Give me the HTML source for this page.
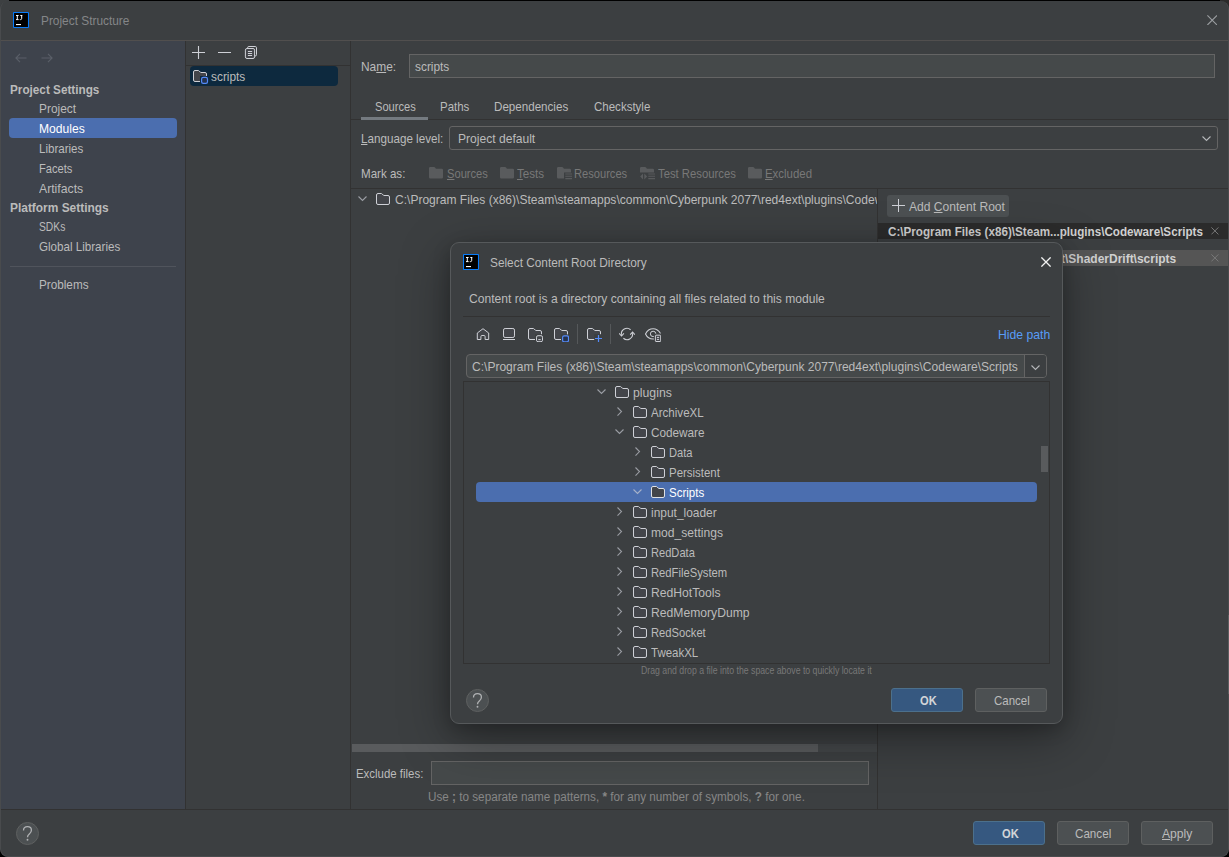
<!DOCTYPE html>
<html>
<head>
<meta charset="utf-8">
<title>Project Structure</title>
<style>
*{box-sizing:border-box;margin:0;padding:0}
html,body{width:1229px;height:857px;overflow:hidden;background:#000}
body{font-family:"Liberation Sans",sans-serif;font-size:13px;color:#bbbbbb;position:relative}
div,svg,span{position:absolute}
.t{white-space:nowrap;line-height:16px;height:16px;transform-origin:0 0}
.t b{font-weight:bold}
u{text-decoration:underline;text-decoration-thickness:1px;text-underline-offset:0.5px}
#win{left:0;top:1px;width:1229px;height:856px;background:#3c3f41;border-radius:8px;overflow:hidden}
.v{width:1px;background:#323232}
.h{height:1px;background:#323232}
.btn{height:24px;border:1px solid #5e6060;background:#4c5052;border-radius:3px}
.def{background:#365880;border-color:#4c708c}
.help{width:23px;height:23px;border-radius:50%;background:#4c5052;border:1px solid #5e6060}
.field{background:#45494a;border:1px solid #646464}
.sel{background:#4b6eaf;border-radius:4px}
</style>
</head>
<body>
<div style="left:0;top:0;width:9px;height:10px;background:#3d4042"></div>
<div style="left:1220px;top:0;width:9px;height:10px;background:#2b2b2b"></div>
<div id="win">
<div id="pg" style="left:0;top:-1px;width:1229px;height:857px">
<div class="h" style="left:0;top:40px;width:1229px;background:#514f4e"></div>
<svg style="left:13px;top:12px" width="16" height="16" viewBox="0 0 16 16"><rect x="0.5" y="0.5" width="15" height="15" rx="0.8" fill="#000" stroke="#087cfa" stroke-width="1.1"/><path d="M3 3.5 H5.6 M4.3 3.5 V7.6 M3 7.6 H5.6 M7.3 3.5 H9.3 M8.7 3.5 V6.4 Q8.7 7.6 7.5 7.6 H6.8" fill="none" stroke="#fff" stroke-width="1"/><rect x="3" y="12" width="5" height="1.1" fill="#fff"/></svg>
<svg style="left:1206.8px;top:14.8px" width="10.4" height="10.4" viewBox="0 0 10.4 10.4"><path d="M0.4 0.4 L10.0 10.0 M10.0 0.4 L0.4 10.0" fill="none" stroke="#9a9da0" stroke-width="1.1"/></svg>
<div style="left:0;top:41px;width:185px;height:768px;background:#3e434c"></div>
<div class="v" style="left:185px;top:41px;height:768px"></div>
<div class="v" style="left:350px;top:41px;height:768px"></div>
<div class="h" style="left:0;top:809px;width:1229px"></div>
<svg style="left:15px;top:53px" width="12" height="10" viewBox="0 0 12 10"><path d="M11.5 5 H1 M5 0.8 L0.9 5 L5 9.2" fill="none" stroke="#5a5f68" stroke-width="1.1"/></svg>
<svg style="left:41px;top:53px" width="12" height="10" viewBox="0 0 12 10"><path d="M0.5 5 H11 M7 0.8 L11.1 5 L7 9.2" fill="none" stroke="#5a5f68" stroke-width="1.1"/></svg>
<div class="sel" style="left:9px;top:118px;width:168px;height:20px"></div>
<div class="h" style="left:10px;top:266px;width:166px;background:#50545c"></div>
<svg style="left:192px;top:46px" width="13" height="13" viewBox="0 0 13 13"><path d="M6.5 0 V13 M0 6.5 H13" stroke="#ced0d6" stroke-width="1.1" fill="none"/></svg>
<svg style="left:218px;top:46px" width="13" height="13" viewBox="0 0 13 13"><path d="M0 6.5 H13" stroke="#ced0d6" stroke-width="1.1" fill="none"/></svg>
<svg style="left:244px;top:46px" width="13" height="13" viewBox="0 0 13 13"><path d="M3.6 2.2 V1.8 Q3.6 0.5 4.9 0.5 H11.2 Q12.5 0.5 12.5 1.8 V8.7 Q12.5 10 11.2 10 H10.9" fill="none" stroke="#ced0d6" stroke-width="1"/><rect x="1.4" y="2.5" width="9.2" height="10" rx="1.6" fill="#43454a" stroke="#ced0d6" stroke-width="1"/><path d="M3.9 5.5 H8.1 M3.9 7.5 H8.1 M3.9 9.5 H8.1" stroke="#ced0d6" stroke-width="1"/></svg>
<div class="h" style="left:186px;top:65px;width:164px"></div>
<div style="left:190px;top:66px;width:148px;height:20px;background:#0d293e;border-radius:4px"></div>
<svg style="left:192px;top:68px" width="16" height="16" viewBox="0 0 16 16"><path d="M1.5 4 Q1.5 2.5 3 2.5 H6.2 Q6.8 2.5 7.2 2.95 L8.3 4.2 Q8.6 4.5 9 4.5 H13 Q14.5 4.5 14.5 6 V12 Q14.5 13.5 13 13.5 H3 Q1.5 13.5 1.5 12 Z" fill="#43454a" stroke="#ced0d6" stroke-width="1"/></svg>
<div style="left:200px;top:76px;width:9px;height:9px;background:#0d293e"></div>
<svg style="left:200px;top:76px" width="9" height="9" viewBox="0 0 9 9"><rect x="1.6" y="1.4" width="5.9" height="5.9" rx="1.6" fill="#25324d" stroke="#548af7" stroke-width="1.2"/></svg>
<div class="field" style="left:409px;top:54px;width:806px;height:24px"></div>
<div class="h" style="left:351px;top:119px;width:878px"></div>
<div style="left:361px;top:117px;width:67px;height:3px;background:#747a80"></div>
<div style="left:449px;top:126px;width:769px;height:24px;border:1px solid #646464;border-radius:3px;background:#3c3f41"></div>
<svg style="left:1201.7px;top:136.3px" width="10" height="6" viewBox="0 0 10 6"><path d="M0.5 0.5 L4.5 4.4 L8.5 0.5" fill="none" stroke="#b4b6b9" stroke-width="1.1"/></svg>
<svg style="left:429px;top:167px" width="16" height="13" viewBox="0 0 16 13"><path d="M0 1.2 Q0 0 1.2 0 H5 Q5.7 0 6.1 0.6 L6.9 1.8 H12.8 Q14 1.8 14 3 V10.3 Q14 11.5 12.8 11.5 H1.2 Q0 11.5 0 10.3 Z" fill="#595b5d"/></svg>
<svg style="left:500px;top:167px" width="16" height="13" viewBox="0 0 16 13"><path d="M0 1.2 Q0 0 1.2 0 H5 Q5.7 0 6.1 0.6 L6.9 1.8 H12.8 Q14 1.8 14 3 V10.3 Q14 11.5 12.8 11.5 H1.2 Q0 11.5 0 10.3 Z" fill="#595b5d"/></svg>
<svg style="left:557px;top:167px" width="16" height="13" viewBox="0 0 16 13"><path d="M0 1.2 Q0 0 1.2 0 H5 Q5.7 0 6.1 0.6 L6.9 1.8 H12.8 Q14 1.8 14 3 V5.6 H7 V11.5 H1.2 Q0 11.5 0 10.3 Z" fill="#595b5d"/><path d="M8.3 7 H15 M8.3 9.3 H15 M8.3 11.6 H15" stroke="#595b5d" stroke-width="1.1"/></svg>
<svg style="left:640px;top:167px" width="16" height="13" viewBox="0 0 16 13"><path d="M0 1.2 Q0 0 1.2 0 H5 Q5.7 0 6.1 0.6 L6.9 1.8 H12.8 Q14 1.8 14 3 V5.6 H0 Z" fill="#595b5d"/><path d="M3 6.6 V12.4 L0.2 9.5 Z M4.3 6.6 V12.4 L7.1 9.5 Z" fill="#595b5d"/><path d="M8.3 7 H15 M8.3 9.3 H15 M8.3 11.6 H15" stroke="#595b5d" stroke-width="1.1"/></svg>
<svg style="left:748px;top:167px" width="16" height="13" viewBox="0 0 16 13"><path d="M0 1.2 Q0 0 1.2 0 H5 Q5.7 0 6.1 0.6 L6.9 1.8 H12.8 Q14 1.8 14 3 V10.3 Q14 11.5 12.8 11.5 H1.2 Q0 11.5 0 10.3 Z" fill="#595b5d"/></svg>
<div class="h" style="left:351px;top:188px;width:878px"></div>
<div class="v" style="left:877px;top:189px;height:620px"></div>
<svg style="left:358.2px;top:195.6px" width="10" height="6" viewBox="0 0 10 6"><path d="M0.5 0.5 L4.5 4.4 L8.5 0.5" fill="none" stroke="#9a9da3" stroke-width="1.1"/></svg>
<svg style="left:375px;top:191px" width="16" height="16" viewBox="0 0 16 16"><path d="M1.5 4 Q1.5 2.5 3 2.5 H6.2 Q6.8 2.5 7.2 2.95 L8.3 4.2 Q8.6 4.5 9 4.5 H13 Q14.5 4.5 14.5 6 V12 Q14.5 13.5 13 13.5 H3 Q1.5 13.5 1.5 12 Z" fill="#43454a" stroke="#ced0d6" stroke-width="1"/></svg>
<div id="clip" style="left:351px;top:189px;width:526px;height:30px;overflow:hidden"><span class="t" style="left:43.70px;top:2.70px;font-size:13px;color:#bbbbbb;transform:scaleX(0.9258)">C:\Program Files (x86)\Steam\steamapps\common\Cyberpunk 2077\red4ext\plugins\Codeware\Scripts</span></div>
<div style="left:887px;top:195px;width:122px;height:22px;background:#4c5052;border-radius:3px"></div>
<svg style="left:892px;top:199px" width="13" height="13" viewBox="0 0 13 13"><path d="M6.5 0 V13 M0 6.5 H13" stroke="#ced0d6" stroke-width="1" fill="none"/></svg>
<div style="left:878px;top:223px;width:351px;height:16px;background:#2b2b2b"></div>
<div style="left:878px;top:250px;width:351px;height:16px;background:#555555"></div>
<svg style="left:1211.1999999999998px;top:227.2px" width="7.8" height="7.8" viewBox="0 0 7.8 7.8"><path d="M0.4 0.4 L7.3999999999999995 7.3999999999999995 M7.3999999999999995 0.4 L0.4 7.3999999999999995" fill="none" stroke="#777777" stroke-width="1.0"/></svg>
<svg style="left:1211.1999999999998px;top:254.29999999999998px" width="7.8" height="7.8" viewBox="0 0 7.8 7.8"><path d="M0.4 0.4 L7.3999999999999995 7.3999999999999995 M7.3999999999999995 0.4 L0.4 7.3999999999999995" fill="none" stroke="#787878" stroke-width="1.0"/></svg>
<div style="left:352px;top:744px;width:525px;height:8px;background:#434648"></div>
<div style="left:352px;top:744px;width:466px;height:8px;background:#595b5d"></div>
<div class="field" style="left:431px;top:761px;width:438px;height:24px"></div>
<div class="help" style="left:16px;top:822px"></div>
<div class="btn def" style="left:973px;top:821px;width:72px"></div>
<div class="btn" style="left:1057px;top:821px;width:72px"></div>
<div class="btn" style="left:1141px;top:821px;width:72px"></div>
<span class="t" style="left:41.39px;top:13.00px;font-size:13px;color:#848688;transform:scaleX(0.9126)">Project Structure</span>
<span class="t" style="left:10.40px;top:82.00px;font-size:13px;color:#bbbbbb;transform:scaleX(0.9031);font-weight:bold">Project Settings</span>
<span class="t" style="left:39.38px;top:101.00px;font-size:13px;color:#bbbbbb;transform:scaleX(0.9154)">Project</span>
<span class="t" style="left:39.37px;top:121.00px;font-size:13px;color:#ffffff;transform:scaleX(0.9313)">Modules</span>
<span class="t" style="left:39.41px;top:141.00px;font-size:13px;color:#bbbbbb;transform:scaleX(0.8878)">Libraries</span>
<span class="t" style="left:39.44px;top:161.00px;font-size:13px;color:#bbbbbb;transform:scaleX(0.8553)">Facets</span>
<span class="t" style="left:38.80px;top:181.00px;font-size:13px;color:#bbbbbb;transform:scaleX(0.9404)">Artifacts</span>
<span class="t" style="left:10.38px;top:200.00px;font-size:13px;color:#bbbbbb;transform:scaleX(0.9170);font-weight:bold">Platform Settings</span>
<span class="t" style="left:38.91px;top:219.00px;font-size:13px;color:#bbbbbb;transform:scaleX(0.7906)">SDKs</span>
<span class="t" style="left:38.80px;top:239.00px;font-size:13px;color:#bbbbbb;transform:scaleX(0.8923)">Global Libraries</span>
<span class="t" style="left:39.40px;top:277.00px;font-size:13px;color:#bbbbbb;transform:scaleX(0.9019)">Problems</span>
<span class="t" style="left:211.20px;top:69.00px;font-size:13px;color:#bbbbbb;transform:scaleX(0.9135)">scripts</span>
<span class="t" style="left:360.88px;top:59.00px;font-size:13px;color:#bbbbbb;transform:scaleX(0.9167)">Na<u>m</u>e:</span>
<span class="t" style="left:415.20px;top:59.00px;font-size:13px;color:#bbbbbb;transform:scaleX(0.9135)">scripts</span>
<span class="t" style="left:374.55px;top:99.00px;font-size:13px;color:#bbbbbb;transform:scaleX(0.8532)">Sources</span>
<span class="t" style="left:439.92px;top:99.00px;font-size:13px;color:#bbbbbb;transform:scaleX(0.8812)">Paths</span>
<span class="t" style="left:493.91px;top:99.00px;font-size:13px;color:#bbbbbb;transform:scaleX(0.8927)">Dependencies</span>
<span class="t" style="left:594.20px;top:99.00px;font-size:13px;color:#bbbbbb;transform:scaleX(0.8857)">Checkstyle</span>
<span class="t" style="left:360.90px;top:131.00px;font-size:13px;color:#bbbbbb;transform:scaleX(0.8967)"><u>L</u>anguage level:</span>
<span class="t" style="left:457.87px;top:131.00px;font-size:13px;color:#bbbbbb;transform:scaleX(0.9293)">Project default</span>
<span class="t" style="left:360.91px;top:165.50px;font-size:13px;color:#bbbbbb;transform:scaleX(0.8896)">Mark as:</span>
<span class="t" style="left:446.54px;top:166.00px;font-size:13px;color:#787878;transform:scaleX(0.8574)"><u>S</u>ources</span>
<span class="t" style="left:517.20px;top:166.00px;font-size:13px;color:#787878;transform:scaleX(0.8933)"><u>T</u>ests</span>
<span class="t" style="left:573.94px;top:166.00px;font-size:13px;color:#787878;transform:scaleX(0.8557)">Resources</span>
<span class="t" style="left:657.70px;top:166.00px;font-size:13px;color:#787878;transform:scaleX(0.8685)">Test Resources</span>
<span class="t" style="left:765.42px;top:166.00px;font-size:13px;color:#787878;transform:scaleX(0.8788)"><u>E</u>xcluded</span>
<span class="t" style="left:909.10px;top:199.00px;font-size:13px;color:#bbbbbb;transform:scaleX(0.9282)">Add <u>C</u>ontent Root</span>
<span class="t" style="left:888.20px;top:223.50px;font-size:13px;color:#d0d0d0;transform:scaleX(0.8969);font-weight:bold">C:\Program Files (x86)\Steam...plugins\Codeware\Scripts</span>
<span class="t" style="left:1060.70px;top:251.00px;font-size:13px;color:#d0d0d0;transform:scaleX(0.9224);font-weight:bold">t\ShaderDrift\scripts</span>
<span class="t" style="left:355.85px;top:766.00px;font-size:12px;color:#bbbbbb;transform:scaleX(0.9522)">Exclude files:</span>
<span class="t" style="left:428.32px;top:788.50px;font-size:12px;color:#868686;transform:scaleX(0.9758)">Use <b>;</b> to separate name patterns, <b>*</b> for any number of symbols, <b>?</b> for one.</span>
<span class="t" style="left:1001.70px;top:825.50px;font-size:13px;color:#d2d5d8;transform:scaleX(0.8579);font-weight:bold">OK</span>
<span class="t" style="left:1075.20px;top:825.50px;font-size:13px;color:#bbbbbb;transform:scaleX(0.8950)">Cancel</span>
<span class="t" style="left:1162.20px;top:825.50px;font-size:13px;color:#bbbbbb;transform:scaleX(0.9333)"><u>A</u>pply</span>
<svg style="left:16px;top:822px" width="23" height="23" viewBox="0 0 23 23"><path d="M7.5 8.6 Q7.5 4.7 11.5 4.7 Q15.4 4.7 15.4 8.2 Q15.4 10.2 13.3 11.9 Q11.5 13.3 11.5 15.3" fill="none" stroke="#b0b2b4" stroke-width="1.3"/><circle cx="11.5" cy="17.8" r="0.95" fill="#b0b2b4"/></svg>
<div id="modal" style="left:450px;top:242px;width:613px;height:482px;background:#3c3f41;border:1px solid #56595b;border-radius:9px;box-shadow:0 14px 50px 0 rgba(0,0,0,0.36),0 5px 18px 0 rgba(0,0,0,0.2)"></div>
<svg style="left:463px;top:254px" width="16" height="16" viewBox="0 0 16 16"><rect x="0.5" y="0.5" width="15" height="15" rx="0.8" fill="#000" stroke="#087cfa" stroke-width="1.1"/><path d="M3 3.5 H5.6 M4.3 3.5 V7.6 M3 7.6 H5.6 M7.3 3.5 H9.3 M8.7 3.5 V6.4 Q8.7 7.6 7.5 7.6 H6.8" fill="none" stroke="#fff" stroke-width="1"/><rect x="3" y="12" width="5" height="1.1" fill="#fff"/></svg>
<svg style="left:1041px;top:257px" width="10" height="10" viewBox="0 0 10 10"><path d="M0.4 0.4 L9.6 9.6 M9.6 0.4 L0.4 9.6" fill="none" stroke="#f2f2f2" stroke-width="1.3"/></svg>
<div class="h" style="left:463px;top:316px;width:587px"></div>
<svg style="left:475px;top:326px" width="16" height="16" viewBox="0 0 16 16"><path d="M2.3 7 L8 2.7 L13.7 7 V13.5 H10.1 V10.6 Q10.1 9.5 9 9.5 H7 Q5.9 9.5 5.9 10.6 V13.5 H2.3 Z" fill="#43454a" stroke="#ced0d6" stroke-width="1" stroke-linejoin="round"/></svg>
<svg style="left:501px;top:326px" width="16" height="16" viewBox="0 0 16 16"><rect x="2.5" y="2.5" width="11" height="9" rx="1.6" fill="#43454a" stroke="#ced0d6" stroke-width="1"/><path d="M2 13.5 H14" stroke="#ced0d6" stroke-width="1"/></svg>
<svg style="left:527px;top:326px" width="16" height="16" viewBox="0 0 16 16"><path d="M1.5 4 Q1.5 2.5 3 2.5 H6.2 Q6.8 2.5 7.2 2.95 L8.3 4.2 Q8.6 4.5 9 4.5 H13 Q14.5 4.5 14.5 6 V12 Q14.5 13.5 13 13.5 H3 Q1.5 13.5 1.5 12 Z" fill="#43454a" stroke="#ced0d6" stroke-width="1"/><rect x="8" y="8.2" width="9" height="9" fill="#3c3f41"/><rect x="9.5" y="9.7" width="6" height="6" rx="1.5" fill="#43454a" stroke="#ced0d6" stroke-width="1"/><path d="M11.3 13.6 H13.7" stroke="#ced0d6" stroke-width="1"/></svg>
<svg style="left:553px;top:326px" width="16" height="16" viewBox="0 0 16 16"><path d="M1.5 4 Q1.5 2.5 3 2.5 H6.2 Q6.8 2.5 7.2 2.95 L8.3 4.2 Q8.6 4.5 9 4.5 H13 Q14.5 4.5 14.5 6 V12 Q14.5 13.5 13 13.5 H3 Q1.5 13.5 1.5 12 Z" fill="#43454a" stroke="#ced0d6" stroke-width="1"/><rect x="8" y="8.4" width="9" height="9" fill="#3c3f41"/><rect x="9.6" y="9.9" width="5.9" height="5.9" rx="1.5" fill="#25324d" stroke="#548af7" stroke-width="1.2"/></svg>
<div class="v" style="left:577px;top:324px;height:20px;background:#55585a"></div>
<div class="v" style="left:610px;top:324px;height:20px;background:#55585a"></div>
<svg style="left:586px;top:326px" width="16" height="16" viewBox="0 0 16 16"><path d="M1.5 4 Q1.5 2.5 3 2.5 H6.2 Q6.8 2.5 7.2 2.95 L8.3 4.2 Q8.6 4.5 9 4.5 H13 Q14.5 4.5 14.5 6 V12 Q14.5 13.5 13 13.5 H3 Q1.5 13.5 1.5 12 Z" fill="#43454a" stroke="#ced0d6" stroke-width="1"/><rect x="8.2" y="8.2" width="9" height="9" fill="#3c3f41"/><path d="M12.5 9 V16 M9 12.5 H16" stroke="#548af7" stroke-width="1.2"/></svg>
<svg style="left:619px;top:326px" width="16" height="16" viewBox="0 0 16 16"><path d="M2.43 8.8 A5.6 5.6 0 0 1 11.6 3.71 M4.4 12.29 A5.6 5.6 0 0 0 13.57 7.2" fill="none" stroke="#ced0d6" stroke-width="1.1"/><path d="M0.1 7.4 L2.5 10 L4.9 7.4 M11.2 8.7 L13.6 6.1 L16 8.7" fill="none" stroke="#ced0d6" stroke-width="1.1"/></svg>
<svg style="left:645px;top:326px" width="16" height="16" viewBox="0 0 16 16"><path d="M15.6 7.6 C13.6 4.3 11.2 2.8 8.1 2.8 C4.6 2.8 2 4.9 0.5 7.9 C2 11 4.6 13 8.1 13 H9.4" fill="none" stroke="#ced0d6" stroke-width="1.1"/><circle cx="8.1" cy="7.9" r="2.7" fill="none" stroke="#ced0d6" stroke-width="1"/><rect x="8.9" y="7.7" width="9" height="9" fill="#3c3f41"/><rect x="10.4" y="9.2" width="5.3" height="6.3" rx="0.6" fill="#43454a" stroke="#ced0d6" stroke-width="1"/><path d="M11.9 11.4 H14.1 M11.9 13.4 H14.1" stroke="#ced0d6" stroke-width="1"/></svg>
<div class="field" style="left:466px;top:354px;width:581px;height:24px;border-radius:4px"></div>
<div style="left:1024px;top:355px;width:22px;height:22px;background:#3c3f41;border-left:1px solid #646464;border-radius:0 3px 3px 0"></div>
<svg style="left:1030.5px;top:364.6px" width="10" height="6" viewBox="0 0 10 6"><path d="M0.5 0.5 L4.5 4.4 L8.5 0.5" fill="none" stroke="#b4b6b9" stroke-width="1.1"/></svg>
<div style="left:463px;top:381px;width:587px;height:283px;border:1px solid #323232"></div>
<div style="left:1040.5px;top:446px;width:7.5px;height:26px;background:#595b5d"></div>
<div class="sel" style="left:476px;top:482px;width:561px;height:20px"></div>
<svg style="left:614px;top:384px" width="16" height="16" viewBox="0 0 16 16"><path d="M1.5 4 Q1.5 2.5 3 2.5 H6.2 Q6.8 2.5 7.2 2.95 L8.3 4.2 Q8.6 4.5 9 4.5 H13 Q14.5 4.5 14.5 6 V12 Q14.5 13.5 13 13.5 H3 Q1.5 13.5 1.5 12 Z" fill="#43454a" stroke="#ced0d6" stroke-width="1"/></svg>
<svg style="left:597px;top:388.5px" width="10" height="6" viewBox="0 0 10 6"><path d="M0.5 0.5 L4.5 4.4 L8.5 0.5" fill="none" stroke="#9a9da3" stroke-width="1.1"/></svg>
<svg style="left:632px;top:404px" width="16" height="16" viewBox="0 0 16 16"><path d="M1.5 4 Q1.5 2.5 3 2.5 H6.2 Q6.8 2.5 7.2 2.95 L8.3 4.2 Q8.6 4.5 9 4.5 H13 Q14.5 4.5 14.5 6 V12 Q14.5 13.5 13 13.5 H3 Q1.5 13.5 1.5 12 Z" fill="#43454a" stroke="#ced0d6" stroke-width="1"/></svg>
<svg style="left:616.6px;top:407.2px" width="6" height="10" viewBox="0 0 6 10"><path d="M0.5 0.5 L4.5 4.6 L0.5 8.7" fill="none" stroke="#9a9da3" stroke-width="1.1"/></svg>
<svg style="left:632px;top:424px" width="16" height="16" viewBox="0 0 16 16"><path d="M1.5 4 Q1.5 2.5 3 2.5 H6.2 Q6.8 2.5 7.2 2.95 L8.3 4.2 Q8.6 4.5 9 4.5 H13 Q14.5 4.5 14.5 6 V12 Q14.5 13.5 13 13.5 H3 Q1.5 13.5 1.5 12 Z" fill="#43454a" stroke="#ced0d6" stroke-width="1"/></svg>
<svg style="left:615px;top:428.5px" width="10" height="6" viewBox="0 0 10 6"><path d="M0.5 0.5 L4.5 4.4 L8.5 0.5" fill="none" stroke="#9a9da3" stroke-width="1.1"/></svg>
<svg style="left:650px;top:444px" width="16" height="16" viewBox="0 0 16 16"><path d="M1.5 4 Q1.5 2.5 3 2.5 H6.2 Q6.8 2.5 7.2 2.95 L8.3 4.2 Q8.6 4.5 9 4.5 H13 Q14.5 4.5 14.5 6 V12 Q14.5 13.5 13 13.5 H3 Q1.5 13.5 1.5 12 Z" fill="#43454a" stroke="#ced0d6" stroke-width="1"/></svg>
<svg style="left:634.6px;top:447.2px" width="6" height="10" viewBox="0 0 6 10"><path d="M0.5 0.5 L4.5 4.6 L0.5 8.7" fill="none" stroke="#9a9da3" stroke-width="1.1"/></svg>
<svg style="left:650px;top:464px" width="16" height="16" viewBox="0 0 16 16"><path d="M1.5 4 Q1.5 2.5 3 2.5 H6.2 Q6.8 2.5 7.2 2.95 L8.3 4.2 Q8.6 4.5 9 4.5 H13 Q14.5 4.5 14.5 6 V12 Q14.5 13.5 13 13.5 H3 Q1.5 13.5 1.5 12 Z" fill="#43454a" stroke="#ced0d6" stroke-width="1"/></svg>
<svg style="left:634.6px;top:467.2px" width="6" height="10" viewBox="0 0 6 10"><path d="M0.5 0.5 L4.5 4.6 L0.5 8.7" fill="none" stroke="#9a9da3" stroke-width="1.1"/></svg>
<svg style="left:650px;top:484px" width="16" height="16" viewBox="0 0 16 16"><path d="M1.5 4 Q1.5 2.5 3 2.5 H6.2 Q6.8 2.5 7.2 2.95 L8.3 4.2 Q8.6 4.5 9 4.5 H13 Q14.5 4.5 14.5 6 V12 Q14.5 13.5 13 13.5 H3 Q1.5 13.5 1.5 12 Z" fill="#43454a" stroke="#dfe1e5" stroke-width="1"/></svg>
<svg style="left:633px;top:488.5px" width="10" height="6" viewBox="0 0 10 6"><path d="M0.5 0.5 L4.5 4.4 L8.5 0.5" fill="none" stroke="#a6b1c9" stroke-width="1.1"/></svg>
<svg style="left:632px;top:504px" width="16" height="16" viewBox="0 0 16 16"><path d="M1.5 4 Q1.5 2.5 3 2.5 H6.2 Q6.8 2.5 7.2 2.95 L8.3 4.2 Q8.6 4.5 9 4.5 H13 Q14.5 4.5 14.5 6 V12 Q14.5 13.5 13 13.5 H3 Q1.5 13.5 1.5 12 Z" fill="#43454a" stroke="#ced0d6" stroke-width="1"/></svg>
<svg style="left:616.6px;top:507.2px" width="6" height="10" viewBox="0 0 6 10"><path d="M0.5 0.5 L4.5 4.6 L0.5 8.7" fill="none" stroke="#9a9da3" stroke-width="1.1"/></svg>
<svg style="left:632px;top:524px" width="16" height="16" viewBox="0 0 16 16"><path d="M1.5 4 Q1.5 2.5 3 2.5 H6.2 Q6.8 2.5 7.2 2.95 L8.3 4.2 Q8.6 4.5 9 4.5 H13 Q14.5 4.5 14.5 6 V12 Q14.5 13.5 13 13.5 H3 Q1.5 13.5 1.5 12 Z" fill="#43454a" stroke="#ced0d6" stroke-width="1"/></svg>
<svg style="left:616.6px;top:527.2px" width="6" height="10" viewBox="0 0 6 10"><path d="M0.5 0.5 L4.5 4.6 L0.5 8.7" fill="none" stroke="#9a9da3" stroke-width="1.1"/></svg>
<svg style="left:632px;top:544px" width="16" height="16" viewBox="0 0 16 16"><path d="M1.5 4 Q1.5 2.5 3 2.5 H6.2 Q6.8 2.5 7.2 2.95 L8.3 4.2 Q8.6 4.5 9 4.5 H13 Q14.5 4.5 14.5 6 V12 Q14.5 13.5 13 13.5 H3 Q1.5 13.5 1.5 12 Z" fill="#43454a" stroke="#ced0d6" stroke-width="1"/></svg>
<svg style="left:616.6px;top:547.2px" width="6" height="10" viewBox="0 0 6 10"><path d="M0.5 0.5 L4.5 4.6 L0.5 8.7" fill="none" stroke="#9a9da3" stroke-width="1.1"/></svg>
<svg style="left:632px;top:564px" width="16" height="16" viewBox="0 0 16 16"><path d="M1.5 4 Q1.5 2.5 3 2.5 H6.2 Q6.8 2.5 7.2 2.95 L8.3 4.2 Q8.6 4.5 9 4.5 H13 Q14.5 4.5 14.5 6 V12 Q14.5 13.5 13 13.5 H3 Q1.5 13.5 1.5 12 Z" fill="#43454a" stroke="#ced0d6" stroke-width="1"/></svg>
<svg style="left:616.6px;top:567.2px" width="6" height="10" viewBox="0 0 6 10"><path d="M0.5 0.5 L4.5 4.6 L0.5 8.7" fill="none" stroke="#9a9da3" stroke-width="1.1"/></svg>
<svg style="left:632px;top:584px" width="16" height="16" viewBox="0 0 16 16"><path d="M1.5 4 Q1.5 2.5 3 2.5 H6.2 Q6.8 2.5 7.2 2.95 L8.3 4.2 Q8.6 4.5 9 4.5 H13 Q14.5 4.5 14.5 6 V12 Q14.5 13.5 13 13.5 H3 Q1.5 13.5 1.5 12 Z" fill="#43454a" stroke="#ced0d6" stroke-width="1"/></svg>
<svg style="left:616.6px;top:587.2px" width="6" height="10" viewBox="0 0 6 10"><path d="M0.5 0.5 L4.5 4.6 L0.5 8.7" fill="none" stroke="#9a9da3" stroke-width="1.1"/></svg>
<svg style="left:632px;top:604px" width="16" height="16" viewBox="0 0 16 16"><path d="M1.5 4 Q1.5 2.5 3 2.5 H6.2 Q6.8 2.5 7.2 2.95 L8.3 4.2 Q8.6 4.5 9 4.5 H13 Q14.5 4.5 14.5 6 V12 Q14.5 13.5 13 13.5 H3 Q1.5 13.5 1.5 12 Z" fill="#43454a" stroke="#ced0d6" stroke-width="1"/></svg>
<svg style="left:616.6px;top:607.2px" width="6" height="10" viewBox="0 0 6 10"><path d="M0.5 0.5 L4.5 4.6 L0.5 8.7" fill="none" stroke="#9a9da3" stroke-width="1.1"/></svg>
<svg style="left:632px;top:624px" width="16" height="16" viewBox="0 0 16 16"><path d="M1.5 4 Q1.5 2.5 3 2.5 H6.2 Q6.8 2.5 7.2 2.95 L8.3 4.2 Q8.6 4.5 9 4.5 H13 Q14.5 4.5 14.5 6 V12 Q14.5 13.5 13 13.5 H3 Q1.5 13.5 1.5 12 Z" fill="#43454a" stroke="#ced0d6" stroke-width="1"/></svg>
<svg style="left:616.6px;top:627.2px" width="6" height="10" viewBox="0 0 6 10"><path d="M0.5 0.5 L4.5 4.6 L0.5 8.7" fill="none" stroke="#9a9da3" stroke-width="1.1"/></svg>
<svg style="left:632px;top:644px" width="16" height="16" viewBox="0 0 16 16"><path d="M1.5 4 Q1.5 2.5 3 2.5 H6.2 Q6.8 2.5 7.2 2.95 L8.3 4.2 Q8.6 4.5 9 4.5 H13 Q14.5 4.5 14.5 6 V12 Q14.5 13.5 13 13.5 H3 Q1.5 13.5 1.5 12 Z" fill="#43454a" stroke="#ced0d6" stroke-width="1"/></svg>
<svg style="left:616.6px;top:647.2px" width="6" height="10" viewBox="0 0 6 10"><path d="M0.5 0.5 L4.5 4.6 L0.5 8.7" fill="none" stroke="#9a9da3" stroke-width="1.1"/></svg>
<div class="help" style="left:466px;top:689px"></div>
<div class="btn def" style="left:891px;top:688px;width:72px"></div>
<div class="btn" style="left:975px;top:688px;width:72px"></div>
<span class="t" style="left:490.29px;top:255.00px;font-size:13px;color:#bbbbbb;transform:scaleX(0.9111)">Select Content Root Directory</span>
<span class="t" style="left:468.70px;top:291.00px;font-size:13px;color:#bbbbbb;transform:scaleX(0.9290)">Content root is a directory containing all files related to this module</span>
<span class="t" style="left:998.36px;top:326.50px;font-size:13px;color:#589df6;transform:scaleX(0.9389)">Hide path</span>
<span class="t" style="left:472.20px;top:359.00px;font-size:13px;color:#bbbbbb;transform:scaleX(0.9258)">C:\Program Files (x86)\Steam\steamapps\common\Cyberpunk 2077\red4ext\plugins\Codeware\Scripts</span>
<span class="t" style="left:633.36px;top:385.00px;font-size:13px;color:#bbbbbb;transform:scaleX(0.9425)">plugins</span>
<span class="t" style="left:651.00px;top:405.00px;font-size:13px;color:#bbbbbb;transform:scaleX(0.8898)">ArchiveXL</span>
<span class="t" style="left:651.20px;top:425.00px;font-size:13px;color:#bbbbbb;transform:scaleX(0.9034)">Codeware</span>
<span class="t" style="left:668.94px;top:445.00px;font-size:13px;color:#bbbbbb;transform:scaleX(0.8556)">Data</span>
<span class="t" style="left:668.92px;top:465.00px;font-size:13px;color:#bbbbbb;transform:scaleX(0.8807)">Persistent</span>
<span class="t" style="left:669.21px;top:485.00px;font-size:13px;color:#ffffff;transform:scaleX(0.8872)">Scripts</span>
<span class="t" style="left:650.88px;top:505.00px;font-size:13px;color:#bbbbbb;transform:scaleX(0.9183)">input_loader</span>
<span class="t" style="left:650.87px;top:525.00px;font-size:13px;color:#bbbbbb;transform:scaleX(0.9303)">mod_settings</span>
<span class="t" style="left:650.95px;top:545.00px;font-size:13px;color:#bbbbbb;transform:scaleX(0.8540)">RedData</span>
<span class="t" style="left:650.94px;top:565.00px;font-size:13px;color:#bbbbbb;transform:scaleX(0.8644)">RedFileSystem</span>
<span class="t" style="left:650.87px;top:585.00px;font-size:13px;color:#bbbbbb;transform:scaleX(0.9342)">RedHotTools</span>
<span class="t" style="left:650.87px;top:605.00px;font-size:13px;color:#bbbbbb;transform:scaleX(0.9346)">RedMemoryDump</span>
<span class="t" style="left:650.94px;top:625.00px;font-size:13px;color:#bbbbbb;transform:scaleX(0.8603)">RedSocket</span>
<span class="t" style="left:651.20px;top:645.00px;font-size:13px;color:#bbbbbb;transform:scaleX(0.8830)">TweakXL</span>
<span class="t" style="left:641.43px;top:662.50px;font-size:10px;color:#787878;transform:scaleX(0.8720)">Drag and drop a file into the space above to quickly locate it</span>
<span class="t" style="left:919.70px;top:693.00px;font-size:13px;color:#d2d5d8;transform:scaleX(0.8579);font-weight:bold">OK</span>
<span class="t" style="left:993.70px;top:693.00px;font-size:13px;color:#bbbbbb;transform:scaleX(0.8825)">Cancel</span>
<svg style="left:466px;top:689px" width="23" height="23" viewBox="0 0 23 23"><path d="M7.5 8.6 Q7.5 4.7 11.5 4.7 Q15.4 4.7 15.4 8.2 Q15.4 10.2 13.3 11.9 Q11.5 13.3 11.5 15.3" fill="none" stroke="#b0b2b4" stroke-width="1.3"/><circle cx="11.5" cy="17.8" r="0.95" fill="#b0b2b4"/></svg>
<div style="left:0;top:1px;width:1229px;height:856px;border:1px solid #494b4d;border-top:none;border-radius:8px"></div>
<div style="left:1228px;top:615px;width:1px;height:79px;background:#5c5e60"></div>
</div></div>
</body>
</html>
